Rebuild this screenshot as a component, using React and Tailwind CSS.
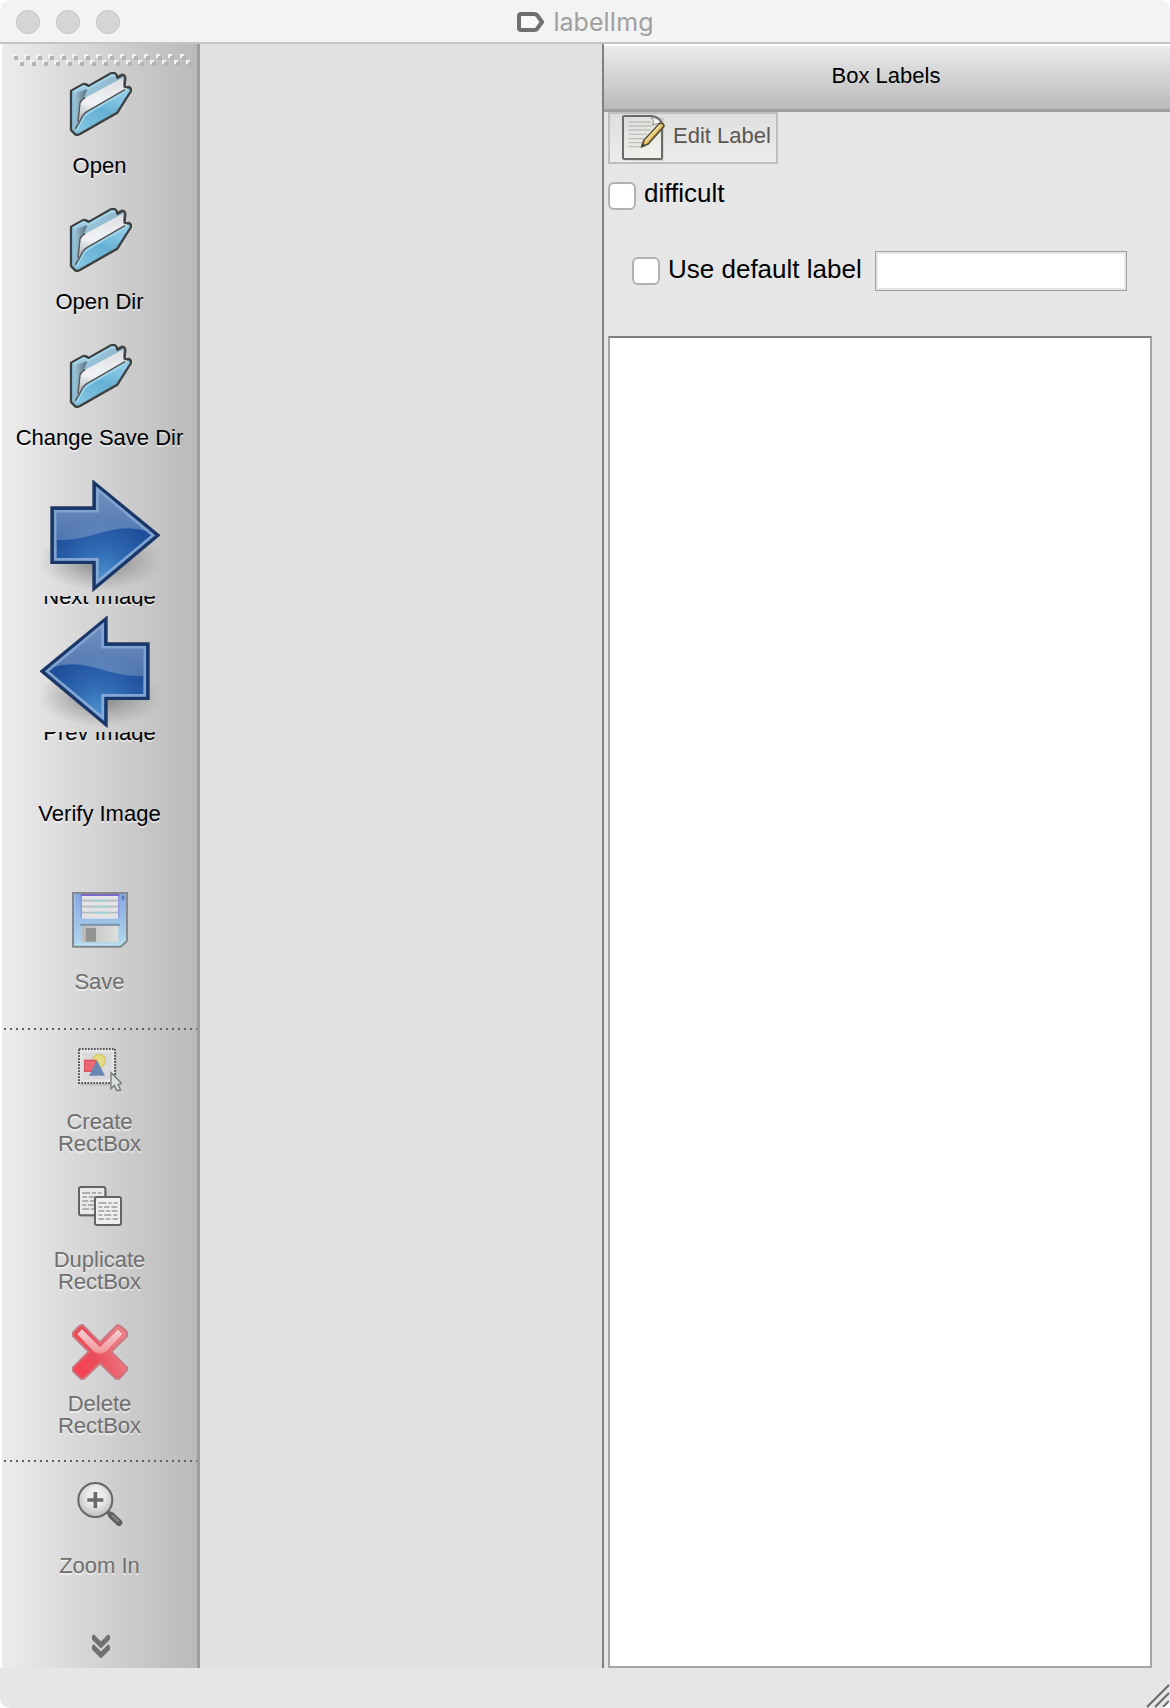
import { useState } from 'react'

const FolderIcon = () => (
  <svg className="h-16 w-16" viewBox="204 216 192 192" aria-hidden="true">
    <defs>
      <linearGradient id="folderBack" x1="0" y1="0" x2="1" y2="1">
        <stop offset="0" stopColor="#a9d8ee" />
        <stop offset="0.45" stopColor="#8fb9cd" />
        <stop offset="1" stopColor="#4a6676" />
      </linearGradient>
      <linearGradient id="folderInside" x1="0" y1="0" x2="1" y2="0">
        <stop offset="0" stopColor="#9cc8dc" />
        <stop offset="1" stopColor="#5b6f7a" />
      </linearGradient>
      <linearGradient id="folderPaper" x1="0.6" y1="0" x2="0.4" y2="1">
        <stop offset="0" stopColor="#dfe1e5" />
        <stop offset="0.6" stopColor="#f1f2f4" />
        <stop offset="1" stopColor="#b0b3b7" />
      </linearGradient>
      <linearGradient id="folderFront" x1="0.8" y1="0" x2="0.2" y2="1">
        <stop offset="0" stopColor="#93cfea" />
        <stop offset="0.5" stopColor="#66b1d4" />
        <stop offset="1" stopColor="#80c4e2" />
      </linearGradient>
    </defs>
    <path
      d="M213 272 L250 252 Q258 251 266 258 L333 220 Q346 216 351 227 L351 232 L366 224 Q376 225 376 235 L373 264 L386 261 Q394 263 393 273 L352 338 L240 402 Q230 407 224 402 L213 390 Z"
      fill="url(#folderBack)" stroke="#3c4043" strokeWidth="7" strokeLinejoin="round"
    />
    <path d="M222 280 L262 268 L252 296 Q240 302 237 318 L231 370 L222 388 Z" fill="url(#folderInside)" />
    <path d="M219 276 L250 258 L266 265 L336 225 L346 228" fill="none" stroke="#a5d7ec" strokeWidth="6" />
    <path d="M219 278 V388" stroke="#82b9d2" strokeWidth="5" />
    <path d="M233 366 L240 310 Q244 298 256 293 L368 233 L370 262 L386 268 L262 340 Q244 350 238 372 Z" fill="url(#folderPaper)" />
    <path d="M352 236 L366 227" stroke="#3c4043" strokeWidth="5" />
    <path d="M234 366 L240 310 Q244 298 256 293" fill="none" stroke="#55595c" strokeWidth="4" />
    <path d="M228 397 L244 360 Q249 344 262 337 L384 267 Q389 268 388 274 L349 334 L236 398 Z" fill="url(#folderFront)" />
    <path d="M229 394 L247 360 Q252 346 264 340 L384 270" fill="none" stroke="#9bd3eb" strokeWidth="5" />
    <path d="M226 386 L243 358 Q248 342 262 334 L376 268" fill="none" stroke="#4b5154" strokeWidth="4" />
  </svg>
)

const ArrowIcon = ({ flipped }) => (
  <svg className={flipped ? 'h-28 w-[120px] -scale-x-100' : 'h-28 w-[120px]'} viewBox="120 60 360 336" aria-hidden="true">
    <defs>
      <radialGradient id="arrowShadow">
        <stop offset="0" stopColor="#000" stopOpacity="0.4" />
        <stop offset="0.6" stopColor="#000" stopOpacity="0.14" />
        <stop offset="1" stopColor="#000" stopOpacity="0" />
      </radialGradient>
      <radialGradient id="arrowBody" gradientUnits="userSpaceOnUse" cx="305" cy="345" r="170">
        <stop offset="0" stopColor="#4a8ccc" />
        <stop offset="0.5" stopColor="#2f68b1" />
        <stop offset="1" stopColor="#1f4f9a" />
      </radialGradient>
      <linearGradient id="arrowGloss" x1="0" y1="0" x2="0" y2="1">
        <stop offset="0" stopColor="#fff" stopOpacity="0.36" />
        <stop offset="1" stopColor="#fff" stopOpacity="0.22" />
      </linearGradient>
    </defs>
    <ellipse cx="300" cy="300" rx="184" ry="92" fill="url(#arrowShadow)" />
    <path d="M282 68 L474 226 L282 386 V307 H156 V144 H282 Z" fill="url(#arrowBody)" stroke="#1b3768" strokeWidth="10" />
    <path d="M170 158 H293 V92 L440 212 Q396 200 350 207 C290 218 240 244 170 239 Z" fill="url(#arrowGloss)" />
    <path d="M292 87 L459 226 L292 365 V298 H166 V154 H292 Z" fill="none" stroke="#93b1d9" strokeOpacity="0.85" strokeWidth="8" />
  </svg>
)

const SaveIcon = () => (
  <svg className="h-14 w-14" viewBox="216 396 168 168" aria-hidden="true">
    <defs>
      <linearGradient id="diskBody" x1="0" y1="0" x2="0" y2="1">
        <stop offset="0" stopColor="#86a7e3" />
        <stop offset="1" stopColor="#b0daec" />
      </linearGradient>
      <linearGradient id="diskShutter" x1="0" y1="0" x2="1" y2="0">
        <stop offset="0" stopColor="#bcbcbc" />
        <stop offset="1" stopColor="#dfdfdf" />
      </linearGradient>
    </defs>
    <path d="M219 399 H381 V543 L362 560 H219 Z" fill="url(#diskBody)" stroke="#85888c" strokeWidth="6" />
    <path d="M224 553 H358 L377 537" fill="none" stroke="#b9e7f6" strokeWidth="4" />
    <path d="M224 403 V552" stroke="#a8c7ef" strokeWidth="3" />
    <rect x="242" y="402" width="116" height="8" fill="#7e68c8" />
    <rect x="242" y="408" width="116" height="66" fill="#8d96dc" />
    <rect x="246" y="408" width="108" height="68" fill="#e3e3e5" />
    <path d="M246 422 H354 M246 440 H354 M246 458 H354" stroke="#b4babd" strokeWidth="5" />
    <path d="M280 422 H325 M280 440 H325 M280 458 H325" stroke="#a1d2d3" strokeWidth="5" />
    <rect x="365" y="407" width="8" height="12" fill="#5b79ae" />
    <rect x="241" y="491" width="119" height="7" fill="#8298ad" />
    <rect x="246" y="498" width="109" height="49" fill="url(#diskShutter)" />
    <rect x="257" y="504" width="31" height="41" rx="3" fill="#929292" />
  </svg>
)

const CreateIcon = () => (
  <svg className="h-11 w-11" viewBox="234 84 132 132" aria-hidden="true">
    <rect x="240" y="96" width="110" height="102" fill="#000" opacity="0.08" />
    <rect x="237" y="87" width="108" height="102" fill="#e4e4e4" />
    <rect x="248" y="98" width="86" height="80" fill="#d9d9d9" />
    <rect x="237" y="87" width="108" height="102" fill="none" stroke="#555" strokeWidth="6" strokeDasharray="5 4" />
    <circle cx="297" cy="122" r="19" fill="#e6dc85" stroke="#d3c463" strokeWidth="4" />
    <rect x="254" y="121" width="34" height="33" fill="#eb6872" stroke="#da5360" strokeWidth="4" />
    <path d="M291 121 L315 167 H267 Z" fill="#6a86b5" />
    <path d="M333 158 V206 L343 196 L351 212 L362 210 L354 193 L365 190 Z" fill="#dadedc" stroke="#727b78" strokeWidth="4" />
  </svg>
)

const DuplicateIcon = () => (
  <svg className="h-10 w-11" viewBox="234 498 132 120" aria-hidden="true">
    <rect x="240" y="506" width="82" height="86" rx="6" fill="#000" opacity="0.1" />
    <rect x="237" y="501" width="79" height="85" rx="6" fill="#eaeaea" stroke="#636363" strokeWidth="6" />
    <g stroke="#9c9c9c" strokeWidth="5">
      <path d="M247 519 h24 m5 0 h12 m5 0 h12 M247 531 h14 m5 0 h20 M247 543 h18 m5 0 h14 M247 555 h12 m5 0 h18 M247 567 h20 m5 0 h10" />
    </g>
    <rect x="285" y="531" width="78" height="84" rx="6" fill="#efefef" stroke="#636363" strokeWidth="6" />
    <g stroke="#9c9c9c" strokeWidth="5">
      <path d="M295 549 h24 m6 0 h10 m6 0 h12 M295 561 h12 m5 0 h16 m6 0 h18 M295 573 h18 m5 0 h12 m5 0 h18 M295 585 h12 m5 0 h22 m6 0 h12 M295 597 h18 m5 0 h14 m6 0 h16" />
    </g>
  </svg>
)

const DeleteIcon = () => (
  <svg className="h-14 w-14" viewBox="216 102 168 168" aria-hidden="true">
    <defs>
      <linearGradient id="crossBody" x1="0" y1="1" x2="1" y2="0.6">
        <stop offset="0" stopColor="#fb3f50" />
        <stop offset="0.5" stopColor="#ea4c5a" />
        <stop offset="1" stopColor="#ee7f88" />
      </linearGradient>
      <linearGradient id="crossGloss" x1="0" y1="0" x2="0" y2="1">
        <stop offset="0" stopColor="#f5d0d3" />
        <stop offset="1" stopColor="#f2959c" />
      </linearGradient>
    </defs>
    <path
      d="M248 105 L300 157 L352 105 L365 111 L381 126 V138 L334 185 L381 232 V240 L358 266 H348 L300 220 L252 266 H242 L219 243 V232 L266 185 L219 138 V128 L238 108 Z"
      fill="url(#crossBody)" stroke="#c87880" strokeWidth="6" strokeLinejoin="round"
    />
    <path d="M246 117 L300 171 L354 117 L369 132 L320 184 Q300 197 280 184 L231 132 Z" fill="url(#crossGloss)" stroke="#f0707b" strokeWidth="3" />
  </svg>
)

const ZoomInIcon = () => (
  <svg className="h-11 w-[46px]" viewBox="233 96 138 132" aria-hidden="true">
    <defs>
      <radialGradient id="lens" cx="0.5" cy="0.4" r="0.6">
        <stop offset="0.4" stopColor="#ededed" />
        <stop offset="1" stopColor="#bcbcbc" />
      </radialGradient>
    </defs>
    <path d="M322 182 L340 200" stroke="#606060" strokeWidth="13" />
    <path d="M336 196 L359 218" stroke="#606060" strokeWidth="20" strokeLinecap="round" />
    <path d="M338 196 L358 215" stroke="#838383" strokeWidth="7" />
    <circle cx="288" cy="150" r="51" fill="url(#lens)" stroke="#676767" strokeWidth="6" />
    <path d="M288 126 V174 M264 150 H312" stroke="#6a6a6a" strokeWidth="11" />
  </svg>
)

const EditIcon = () => (
  <svg className="h-[46px] w-[43px]" viewBox="94 76 129 138" aria-hidden="true">
    <defs>
      <linearGradient id="page" x1="0" y1="0" x2="0.4" y2="1">
        <stop offset="0" stopColor="#dcdcda" />
        <stop offset="1" stopColor="#f0f0ec" />
      </linearGradient>
    </defs>
    <path d="M104 84 H219 V213 H104 Z" fill="#000" opacity="0.12" />
    <path d="M101 79 H184 Q208 82 214 104 V204 Q214 208 209 208 H101 Q97 208 97 204 V83 Q97 79 101 79 Z" fill="url(#page)" stroke="#6a6a6a" strokeWidth="6" />
    <path d="M114 97 H180 M114 109 H184 M114 121 H180 M114 134 H170 M114 147 H162 M114 159 H154 M114 171 H148" stroke="#bebebc" strokeWidth="4" />
    <path d="M182 82 Q192 92 186 106 Q198 100 211 102 Q206 86 182 82 Z" fill="#f5f5f5" stroke="#888" strokeWidth="3" />
    <path d="M152 172 L160 152 L208 100 Q220 100 220 110 L171 164 Z" fill="#e4c168" stroke="#5b5136" strokeWidth="5" strokeLinejoin="round" />
    <path d="M164 154 L208 107" stroke="#f7e19c" strokeWidth="5" />
    <path d="M151 173 L157 160 L164 167 Z" fill="#444" />
  </svg>
)

const Tool = ({ icon, label, className, clipped, disabled }) => (
  <button
    type="button"
    disabled={disabled}
    className={`flex w-full shrink-0 flex-col items-center justify-between text-[22px] leading-[22px] [text-shadow:0_2px_0_rgba(255,255,255,0.5)] ${disabled ? 'text-[#707070]' : 'text-black'} ${className}`}
  >
    {icon}
    <span className={clipped ? 'flex h-[10px] items-end overflow-hidden leading-[18px]' : 'whitespace-pre-line'}>{label}</span>
  </button>
)

const Separator = () => (
  <div className="ml-0.5 h-0.5 shrink-0 bg-[repeating-linear-gradient(90deg,#606060_0_2px,transparent_2px_6px)]" />
)

const Toolbar = () => (
  <nav className="ml-0.5 flex w-[198px] shrink-0 flex-col border-r-[3px] border-[#9e9e9e] bg-linear-to-r from-[#ececec] to-[#bababa]">
    <div className="h-6 shrink-0 pt-[10px] pl-[10px]">
      <svg className="h-3 w-full" aria-hidden="true">
        <defs>
          <pattern id="grip" width="12" height="12" patternUnits="userSpaceOnUse">
            <path d="M2 2h4v4h-4z M8 8h4v4h-4z" fill="#b4b4b4" />
            <path d="M0 0h4v2h-2v2h-2z M6 6h4v2h-2v2h-2z" fill="#f2f2f2" />
          </pattern>
        </defs>
        <rect width="180" height="12" fill="url(#grip)" />
      </svg>
    </div>
    <Tool icon={<FolderIcon />} label="Open" className="h-[136px] pt-1 pb-[27px]" />
    <Tool icon={<FolderIcon />} label="Open Dir" className="h-[136px] pt-1 pb-[27px]" />
    <Tool icon={<FolderIcon />} label="Change Save Dir" className="h-[136px] pt-1 pb-[27px]" />
    <Tool icon={<ArrowIcon />} label="Next Image" className="h-[136px] pt-1 pb-1.5" clipped />
    <Tool icon={<ArrowIcon flipped />} label="Prev Image" className="h-[136px] pt-1 pb-1.5" clipped />
    <Tool label="Verify Image" className="h-[140px] pt-[55px]" />
    <Tool icon={<SaveIcon />} label="Save" className="h-[140px] pt-1 pb-[35px]" disabled />
    <Separator />
    <Tool icon={<CreateIcon />} label={'Create\nRectBox'} className="h-[138px] pt-[18px] pb-[13px]" disabled />
    <Tool icon={<DuplicateIcon />} label={'Duplicate\nRectBox'} className="h-[138px] pt-[18px] pb-[13px]" disabled />
    <Tool icon={<DeleteIcon />} label={'Delete\nRectBox'} className="h-[154px] pt-[18px] pb-[23px]" disabled />
    <Separator />
    <Tool icon={<ZoomInIcon />} label="Zoom In" className="h-[142px] pt-5 pb-[27px]" disabled />
    <button type="button" aria-label="More tools" className="mt-auto flex shrink-0 justify-center pb-[10px] pl-[3px]">
      <svg className="h-6 w-[18px]" viewBox="0 0 18 24" fill="none" stroke="#707070" strokeWidth="5" aria-hidden="true">
        <path d="M0 2 L9 11 L18 2 M0 12 L9 21 L18 12" />
      </svg>
    </button>
  </nav>
)

const checkboxClass =
  'h-7 w-7 shrink-0 appearance-none rounded-md border-2 border-[#b2b2b2] bg-white checked:bg-[#3b82f6]'

const LabelPanel = () => {
  const [difficult, setDifficult] = useState(false)
  const [useDefault, setUseDefault] = useState(false)
  const [defaultLabel, setDefaultLabel] = useState('')

  return (
    <aside className="flex w-[568px] shrink-0 flex-col border-l-2 border-[#808080] bg-[#e6e6e6]">
      <h2 className="h-[68px] border-t-2 border-b-[3px] border-t-white border-b-[#9e9e9e] bg-linear-to-b from-[#ebebeb] to-[#bababa] pt-[19px] pr-0.5 text-center text-[22px] leading-[22px]">
        Box Labels
      </h2>
      <div className="flex flex-1 flex-col pr-[18px] pl-1">
        <button
          type="button"
          disabled
          className="flex h-[52px] w-[170px] items-center gap-2 border-2 border-[#bfbfbf] bg-linear-to-b from-[#dfdfdf] to-[#ececec] pl-3 text-[22px] leading-[22px] whitespace-nowrap text-[#5a5652]"
        >
          <EditIcon />
          <span className="pb-1">Edit Label</span>
        </button>

        <div className="mt-[18px] flex h-7 items-center gap-2">
          <input
            id="difficult"
            type="checkbox"
            className={checkboxClass}
            checked={difficult}
            onChange={(e) => setDifficult(e.target.checked)}
          />
          <label htmlFor="difficult" className="pb-1.5 text-[26px] leading-7">difficult</label>
        </div>

        <div className="mt-10 flex h-[42px] items-center pr-[25px] pl-6">
          <input
            id="use-default"
            type="checkbox"
            className={checkboxClass}
            checked={useDefault}
            onChange={(e) => setUseDefault(e.target.checked)}
          />
          <label htmlFor="use-default" className="ml-2 pb-1 text-[26px] leading-7 whitespace-nowrap">
            Use default label
          </label>
          <input
            type="text"
            aria-label="Default label"
            className="ml-auto h-10 w-[252px] border border-[#a0a0a0] bg-white px-2 text-[22px] ring-2 ring-[#e6e6e6] ring-inset outline-none"
            value={defaultLabel}
            onChange={(e) => setDefaultLabel(e.target.value)}
          />
        </div>

        <ul aria-label="Box labels" className="mt-11 flex-1 border-2 border-[#a6a6a6] border-t-[#808080] bg-white" />
      </div>
    </aside>
  )
}

const App = () => {
  return (
    <div className="flex min-h-screen flex-col overflow-hidden rounded-[10px] bg-white font-['Liberation_Sans',Arial,sans-serif] text-black">
      <header className="grid h-11 shrink-0 grid-cols-[1fr_auto_1fr] items-center border-b-2 border-[#c4c4c4] bg-[#f3f3f3] pt-0.5">
        <div className="flex gap-4 pl-4">
          <button type="button" aria-label="Close" className="h-6 w-6 rounded-full border border-[#c2c2c2] bg-[#d6d6d6]" />
          <button type="button" aria-label="Minimize" className="h-6 w-6 rounded-full border border-[#c2c2c2] bg-[#d6d6d6]" />
          <button type="button" aria-label="Maximize" className="h-6 w-6 rounded-full border border-[#c2c2c2] bg-[#d6d6d6]" />
        </div>
        <div className="flex items-center gap-[10px]">
          <svg className="h-5 w-[27px]" viewBox="0 0 27 20" aria-hidden="true">
            <path d="M4 2 H17 Q19 2 20 3 L25 10 L20 17 Q19 18 17 18 H4 Q2 18 2 16 V4 Q2 2 4 2 Z" fill="#f8f8f8" stroke="#707070" strokeWidth="4" />
          </svg>
          <h1 className="font-['Inter',sans-serif] text-[25px] leading-8 text-[#a0a0a0]">labelImg</h1>
        </div>
      </header>

      <div className="flex flex-1">
        <Toolbar />
        <main className="flex-1 bg-[#e1e1e1]" />
        <LabelPanel />
      </div>

      <footer className="flex h-10 shrink-0 items-end justify-end bg-[#e6e6e6]">
        <svg className="h-6 w-6" viewBox="0 0 24 24" stroke="#686868" strokeWidth="2" aria-hidden="true">
          <path d="M1 23 L23 1 M9 23 L23 9 M17 23 L23 17" />
        </svg>
      </footer>
    </div>
  )
}

export default App
